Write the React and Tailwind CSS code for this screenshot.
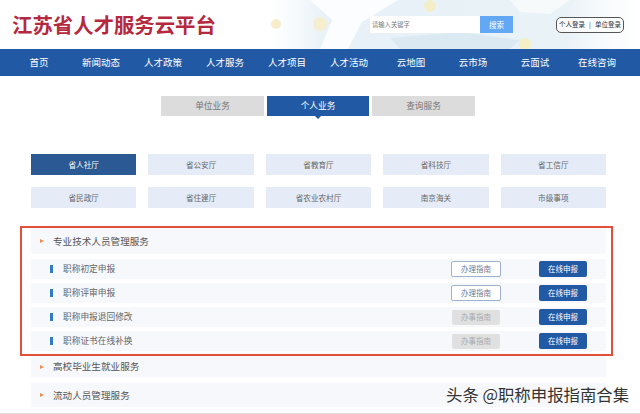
const NAV = ['首页', '新闻动态', '人才政策', '人才服务', '人才项目', '人才活动', '云地图', '云市场', '云面试', '在线咨询']
const DEPTS = ['省人社厅', '省公安厅', '省教育厅', '省科技厅', '省工信厅', '省民政厅', '省住建厅', '省农业农村厅', '南京海关', '市级事项']
const ROWS = [
  { name: '职称初定申报', guide: '办理指南', on: true },
  { name: '职称评审申报', guide: '办理指南', on: true },
  { name: '职称申报退回修改', guide: '办事指南', on: false },
  { name: '职称证书在线补换', guide: '办事指南', on: false },
]

function HeaderMap() {
  return (
    <svg className="absolute left-[270px] top-0 w-[370px] h-[49px]" viewBox="0 0 370 49" aria-hidden="true">
      <defs>
        <linearGradient id="fade" x1="0" x2="1" y1="0" y2="0">
          <stop offset="0" stopColor="#eef5f9" stopOpacity="0" />
          <stop offset="0.15" stopColor="#e8f1f7" />
          <stop offset="0.8" stopColor="#e9f2f7" />
          <stop offset="1" stopColor="#f4f8fa" stopOpacity="0" />
        </linearGradient>
      </defs>
      <rect width="370" height="49" fill="url(#fade)" />
      <path d="M40 0 L62 20 L50 49 L78 49 L92 22 L128 0Z" fill="#fbfdfe" />
      <path d="M120 38 L190 32 L250 40 L240 49 L130 49Z" fill="#dbe9f2" />
      <path d="M240 0 L300 0 L280 14 L250 12Z" fill="#f7fafb" />
      <circle cx="50" cy="24" r="7" fill="#f6efcf" />
      <circle cx="160" cy="6" r="6" fill="#f3edc8" />
      <circle cx="255" cy="44" r="6" fill="#f5efc6" />
      <circle cx="6" cy="24" r="5" fill="#f6eecb" />
    </svg>
  )
}

function Arrow() {
  return <span className="w-0 h-0 border-y-[2.5px] border-y-transparent border-l-[4px] border-l-[#ea8a55] shrink-0" />
}

function SectionRow({ title, className = '' }) {
  return (
    <div className={`flex items-center bg-[#f6f8fb] pl-[9px] text-[9.6px] text-[#555] ${className}`}>
      <Arrow />
      <span className="ml-[9px]">{title}</span>
    </div>
  )
}

export default function App() {
  return (
    <div className="relative w-[640px] h-[414px] overflow-hidden bg-white font-['Noto_Sans_CJK_SC','Liberation_Sans',sans-serif]">
      {/* Header */}
      <div className="relative h-[49px] bg-white">
        <HeaderMap />
        <div className="relative flex items-center h-full">
          <h1 className="ml-[12px] text-[20.4px] leading-none font-bold text-[#b5293f] w-[358px] -mt-[1px]">江苏省人才服务云平台</h1>
          <div className="flex items-center w-[143px] h-[17px] bg-white">
            <span className="pl-[2px] flex-1 text-[6.3px] text-[#777]">请输入关键字</span>
            <span className="flex items-center justify-center w-[33px] h-[17px] bg-[#63a8f5] text-[7.5px] text-white">搜索</span>
          </div>
          <div className="ml-[43px] flex items-center justify-center w-[68px] h-[16px] border border-[#555] rounded-[5px] bg-white/70 text-[6.5px] text-[#333] whitespace-nowrap">
            个人登录<span className="mx-[4px]">|</span>单位登录
          </div>
        </div>
      </div>

      {/* Nav */}
      <nav className="flex items-center h-[27px] bg-[#2159a5] pl-[8px] pr-[12px] text-[9.5px] text-white">
        {NAV.map(item => (
          <span key={item} className="flex-1 text-center whitespace-nowrap">{item}</span>
        ))}
      </nav>

      {/* Tabs */}
      <div className="mt-[20px] ml-[161px] flex gap-[3px]">
        <div className="flex items-center justify-center w-[103px] h-[20px] bg-[#dcdcdc] text-[8.7px] text-[#777]">单位业务</div>
        <div className="relative flex items-center justify-center w-[102px] h-[20px] bg-[#2159a5] text-[8.7px] text-white">
          个人业务
          <span className="absolute left-1/2 -ml-[3px] top-full w-0 h-0 border-x-[3px] border-x-transparent border-t-[3px] border-t-[#2159a5]" />
        </div>
        <div className="flex items-center justify-center w-[103px] h-[20px] bg-[#dcdcdc] text-[8.7px] text-[#777]">查询服务</div>
      </div>

      {/* Departments */}
      <div className="mt-[38px] ml-[31px] w-[575px] grid grid-cols-5 gap-x-[12px] gap-y-[12px]">
        {DEPTS.map((d, i) => (
          <div
            key={d}
            className={`flex items-center justify-center h-[21px] text-[7.6px] ${i === 0 ? 'bg-[#2a5993] text-white' : 'bg-[#e5ecf7] text-[#666]'}`}
          >
            {d}
          </div>
        ))}
      </div>

      {/* Highlighted section */}
      <div className="mt-[18px] ml-[20px] w-[593px] h-[130px] border-2 border-[#e2503a] pl-[9px] pr-[5px]">
        <SectionRow title="专业技术人员管理服务" className="h-[26px]" />
        <div className="mt-[5px] flex flex-col gap-[4px]">
          {ROWS.map(r => (
            <div key={r.name} className="flex items-center h-[20px] bg-[#f6f8fb] text-[8.7px] text-[#666]">
              <span className="ml-[19px] w-[3px] h-[8px] bg-[#2f7cc4]" />
              <span className="ml-[10px] flex-1">{r.name}</span>
              {r.on ? (
                <span className="flex items-center justify-center w-[50px] h-[16px] rounded-[2px] border border-[#9db1cf] bg-white text-[7.5px] text-[#778]">{r.guide}</span>
              ) : (
                <span className="flex items-center justify-center w-[48px] h-[15px] mx-[1px] rounded-[2px] bg-[#e0e0e0] text-[7.5px] text-[#aaa]">{r.guide}</span>
              )}
              <span className="ml-[38px] mr-[19px] flex items-center justify-center w-[48px] h-[16px] rounded-[2px] bg-[#2159a5] text-[7.5px] text-white">在线申报</span>
            </div>
          ))}
        </div>
      </div>

      {/* Collapsed sections */}
      <div className="ml-[31px] w-[575px] flex flex-col gap-[6px]">
        <SectionRow title="高校毕业生就业服务" className="h-[21px]" />
        <SectionRow title="流动人员管理服务" className="h-[24px]" />
      </div>

      <div className="absolute left-0 right-0 bottom-0 h-[1px] bg-[#dedede]" />

      {/* Watermark */}
      <div className="absolute left-[446px] top-[382px] text-[16.4px] leading-[24px] text-[#333] whitespace-nowrap [text-shadow:0_0_2px_#fff,0_0_2px_#fff]">头条 @职称申报指南合集</div>
    </div>
  )
}
